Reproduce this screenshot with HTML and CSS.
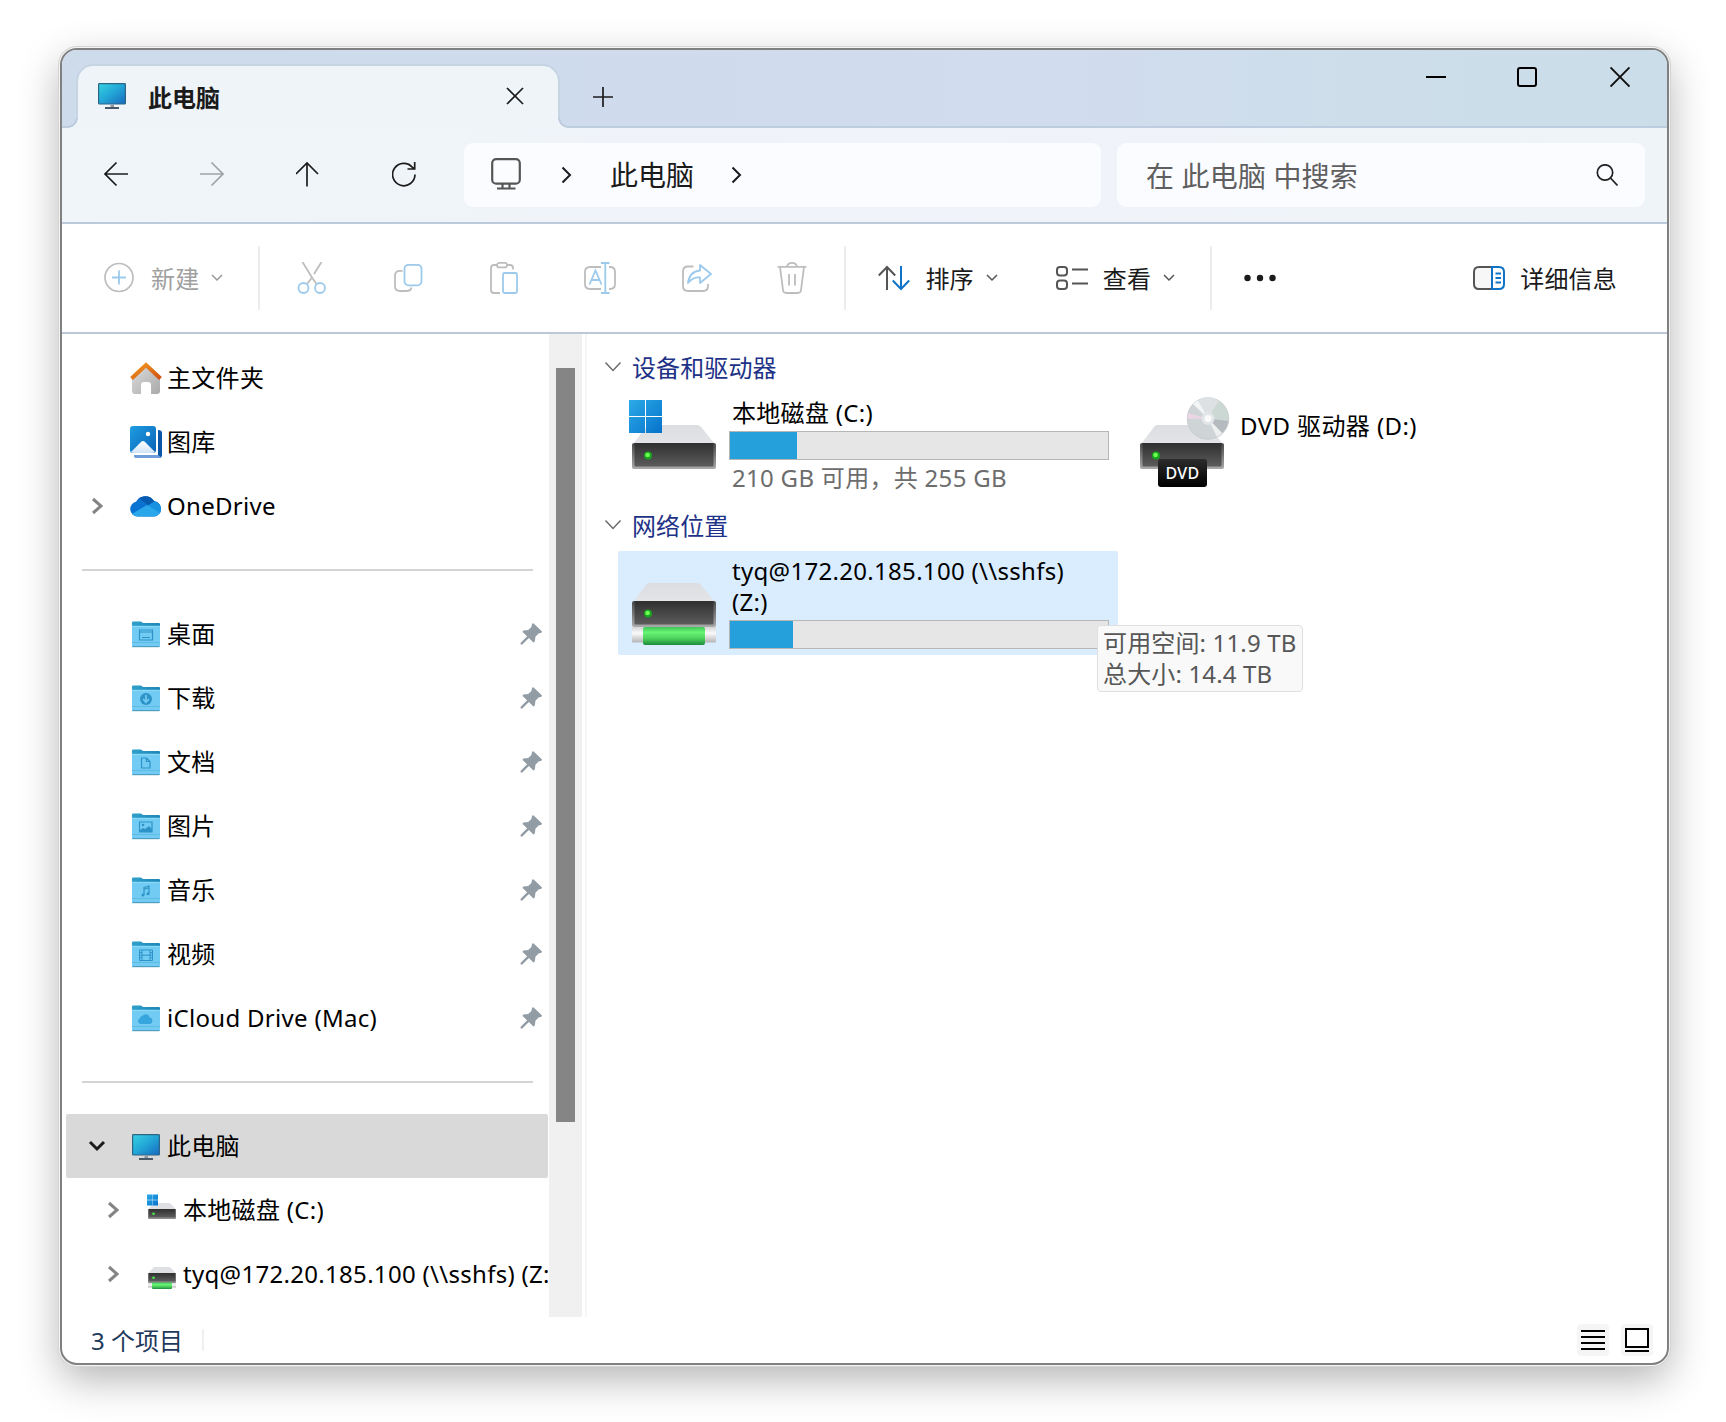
FILE: index.html
```html
<!DOCTYPE html>
<html lang="zh-CN">
<head>
<meta charset="utf-8">
<title>此电脑</title>
<link rel="stylesheet" href="styles.css">
</head>
<body>
<svg class="defs" width="0" height="0" aria-hidden="true">
  <defs>
    <linearGradient id="screen" x1="0" y1="0" x2="1" y2="1"><stop offset="0" stop-color="#35d3e2"/><stop offset=".5" stop-color="#22a5d6"/><stop offset="1" stop-color="#1668bd"/></linearGradient>
    <linearGradient id="win" x1="0" y1="0" x2="1" y2="1"><stop offset="0" stop-color="#2cabe8"/><stop offset="1" stop-color="#0672cb"/></linearGradient>
    <linearGradient id="front" x1="0" y1="0" x2="0" y2="1"><stop offset="0" stop-color="#2f2f2f"/><stop offset="1" stop-color="#5c5c5c"/></linearGradient>
    <linearGradient id="edge" x1="0" y1="0" x2="0" y2="1"><stop offset="0" stop-color="#4a4a4a"/><stop offset="1" stop-color="#aaaaaa"/></linearGradient>
    <linearGradient id="lid" x1="0" y1="0" x2="0" y2="1"><stop offset="0" stop-color="#dcdde0"/><stop offset="1" stop-color="#e4e5e9"/></linearGradient>
    <linearGradient id="cable" x1="0" y1="0" x2="0" y2="1"><stop offset="0" stop-color="#3fc65a"/><stop offset=".3" stop-color="#68f573"/><stop offset=".65" stop-color="#4ccf5c"/><stop offset="1" stop-color="#1c8b3c"/></linearGradient>
    <linearGradient id="sleeve" x1="0" y1="0" x2="0" y2="1"><stop offset="0" stop-color="#d4d4d6"/><stop offset=".4" stop-color="#fafafa"/><stop offset="1" stop-color="#b4b4b6"/></linearGradient>
    <linearGradient id="roof" x1="0" y1="0" x2="1" y2="1"><stop offset="0" stop-color="#f39a1f"/><stop offset="1" stop-color="#cf4f12"/></linearGradient>
    <linearGradient id="wall" x1="0" y1="0" x2="1" y2="1"><stop offset="0" stop-color="#dedede"/><stop offset="1" stop-color="#a9a9a9"/></linearGradient>
    <linearGradient id="photo" x1="0" y1="0" x2="1" y2="1"><stop offset="0" stop-color="#1d9de2"/><stop offset="1" stop-color="#0b63b4"/></linearGradient>
    <linearGradient id="hill" x1="0" y1="0" x2="0" y2="1"><stop offset="0" stop-color="#ffffff"/><stop offset="1" stop-color="#cfe4f8"/></linearGradient>
    <linearGradient id="back" x1="0" y1="0" x2="1" y2="0"><stop offset="0" stop-color="#2fa0cc"/><stop offset="1" stop-color="#1b87b8"/></linearGradient>
    <linearGradient id="dvdlabel" x1="0" y1="0" x2="0" y2="1"><stop offset="0" stop-color="#2c2c2c"/><stop offset="1" stop-color="#000000"/></linearGradient>

    <symbol id="pc" viewBox="0 0 28 26">
      <rect x=".6" y=".6" width="26.8" height="20.4" rx=".8" fill="url(#screen)" stroke="#2c6687" stroke-width="1.2"/>
      <rect x="12.5" y="21.5" width="3.5" height="2.6" fill="#8b98a3"/><rect x="7" y="24" width="14" height="2" fill="#495866"/>
    </symbol>
    <symbol id="windows" viewBox="0 0 33 33">
      <path d="M0 0h16v16H0zM17 0h16v16H17zM0 17h16v16H0zM17 17h16v16H17z" fill="url(#win)"/>
    </symbol>
    <symbol id="drive" viewBox="0 0 84 44">
      <path d="M17 0h48c2 0 3 1 4 2l14 17H1L14 2c1-1 2-2 3-2z" fill="url(#lid)"/>
      <rect x="0" y="18" width="84" height="26" rx="2" fill="url(#edge)"/>
      <rect x="2.5" y="18" width="79" height="23.500" rx="1" fill="url(#front)"/>
      <circle cx="16" cy="30.500" r="4" fill="#17a51d"/><circle cx="15.600" cy="30" r="2.300" fill="#6dff52"/>
    </symbol>
    <symbol id="minidrive" viewBox="0 0 28 16">
      <path d="M6 0h16l6 6.500H0z" fill="#dfe0e3"/><rect y="6" width="28" height="10" rx="1" fill="#8c8c8c"/><rect x=".6" y="6" width="26.800" height="8.400" fill="url(#front)"/><circle cx="5.500" cy="10.800" r="1.300" fill="#46f03f"/>
    </symbol>
    <symbol id="folder" viewBox="0 0 28 27">
      <path d="M0 1.500Q0 .5 1 .5h8l2 1.500h16q1 0 1 1V10H0z" fill="url(#back)"/>
      <rect y="5" width="28" height="21" rx="1.200" fill="#72cbf3"/><path d="M0 5.300h28" stroke="#93dbfa"/>
      <path d="M0 21.500h28" stroke="#5bb6df" stroke-width=".8"/><path d="M.5 25.600h27" stroke="#4f9dbf" stroke-width="1.200"/>
    </symbol>
    <symbol id="pin" viewBox="0 0 22 22">
      <path d="M13.400.3 21.800 8.200q.3 1.500-1.200 1.800l-2 .4-3.200 3.300-.5 4.600q-.8 1.800-2 .7l-4-3.900-6.600 6.500H.6L.5 20l6.600-6.700-4-3.800q-1.200-1.300.5-1.900l4.700-.5L11.400 4l.5-2.500Q12.300.3 13.400.3z" fill="#929ca4"/>
    </symbol>
    <symbol id="right" viewBox="0 0 12 18"><path d="M2 2l8 7-8 7" fill="none" stroke="currentColor" stroke-width="3"/></symbol>
    <symbol id="crumb" viewBox="0 0 11 18"><path d="M1.500 1.500 9 9l-7.500 7.500" fill="none" stroke="currentColor" stroke-width="2"/></symbol>
    <symbol id="down" viewBox="0 0 12 8"><path d="M1 1l5 5 5-5" fill="none" stroke="currentColor" stroke-width="1.500"/></symbol>
    <symbol id="group" viewBox="0 0 18 12"><path d="M1.500 1.500 9 9.500l7.500-8" fill="none" stroke="#6b6b6b" stroke-width="1.500"/></symbol>
  </defs>
</svg>

<main class="window">
  <header class="titlebar">
    <div class="tab">
      <svg width="28" height="26"><use href="#pc"/></svg>
      <span class="tab-title">此电脑</span>
      <svg class="tab-close" width="18" height="18" viewBox="0 0 18 18"><path d="M1 1l16 16M17 1 1 17" stroke="#1c1c1c" stroke-width="1.700"/></svg>
    </div>
    <svg class="tab-new" width="20" height="20" viewBox="0 0 20 20"><path d="M10 0v20M0 10h20" stroke="#1c1c1c" stroke-width="1.700"/></svg>
    <div class="controls">
      <svg width="20" height="22" viewBox="0 0 20 22"><path d="M0 11h20" stroke="#000" stroke-width="2"/></svg>
      <svg width="20" height="22" viewBox="0 0 20 22"><rect x="1" y="2" width="18" height="18" rx="2" fill="none" stroke="#000" stroke-width="2"/></svg>
      <svg width="20" height="22" viewBox="0 0 20 22"><path d="M.5 1.500l19 19M19.500 1.500l-19 19" stroke="#111" stroke-width="1.900"/></svg>
    </div>
  </header>

  <nav class="navbar">
    <div class="nav-buttons">
      <svg width="24" height="26" viewBox="0 0 24 26"><path d="M24 13H1M12.500 1.500 1 13l11.500 11.500" fill="none" stroke="#1c1c1c" stroke-width="1.700"/></svg>
      <svg width="24" height="26" viewBox="0 0 24 26"><path d="M0 13h23M11.500 1.500 23 13 11.500 24.500" fill="none" stroke="#a0a3a8" stroke-width="1.700"/></svg>
      <svg width="24" height="26" viewBox="0 0 24 26"><path d="M11 25.500V2M0 13 11 2l11 11" fill="none" stroke="#1c1c1c" stroke-width="1.700"/></svg>
      <svg width="26" height="26" viewBox="1 0 26 26"><path d="M24 13.500A11.200 11.200 0 1 1 21.500 6.500L23.500 8M23.700 1v7H16.500" fill="none" stroke="#1c1c1c" stroke-width="1.700"/></svg>
    </div>
    <div class="address">
      <svg width="30" height="32" viewBox="0 0 30 32"><g fill="none" stroke="#555" stroke-width="2.200"><rect x="1.200" y="1.200" width="27.600" height="24.500" rx="4"/><path d="M11.500 26v4M18.500 26v4M6 30.500h18.500"/></g></svg>
      <svg width="11" height="18"><use href="#crumb"/></svg>
      <span>此电脑</span>
      <svg width="11" height="18"><use href="#crumb"/></svg>
    </div>
    <div class="search">
      <span>在 此电脑 中搜索</span>
      <svg width="22" height="22" viewBox="0 0 22 22"><circle cx="9" cy="8.500" r="7.700" fill="none" stroke="#222" stroke-width="1.700"/><path d="M14.500 14l7 7.500" stroke="#222" stroke-width="1.700"/></svg>
    </div>
  </nav>

  <section class="toolbar">
    <div class="tool new">
      <svg width="30" height="32" viewBox="0 0 30 32"><circle cx="15" cy="15.500" r="14" fill="none" stroke="#bdbdbd" stroke-width="1.700"/><path d="M15 8.500v14M8 15.500h14" stroke="#9ccaec" stroke-width="1.800"/></svg>
      <span>新建</span><svg class="caret" width="12" height="8"><use href="#down"/></svg>
    </div>
    <i class="divider"></i>
    <div class="icons">
      <svg width="32" height="32" viewBox="0 0 32 32" fill="none" stroke-width="1.800"><path d="M6.500 0 16 15.500 20.500 22M25.500 0l-7.500 12M16 15.500 11 22" stroke="#bdbdbd"/><g stroke="#9ccaec"><circle cx="7.500" cy="26" r="5"/><circle cx="24" cy="26" r="5"/></g></svg>
      <svg width="32" height="32" viewBox="0 0 32 32" fill="none" stroke-width="1.800"><path d="M10.500 8.800H8q-5 0-5 5V24q0 5 5 5h6q5 0 5.500-3.500" stroke="#bdbdbd"/><rect x="12.500" y="2.800" width="17" height="20.500" rx="4" stroke="#9ccaec"/></svg>
      <svg width="32" height="32" viewBox="0 0 32 32" fill="none" stroke-width="1.800"><path d="M9 3H6Q3 3 3 6v22q0 3 3 3h6M19 3h3q3 0 3 3v1.500" stroke="#bdbdbd"/><rect x="9" y=".900" width="10" height="4.500" rx="2.200" stroke="#bdbdbd"/><rect x="15" y="11" width="14" height="20" rx="1.500" stroke="#9ccaec"/></svg>
      <svg width="32" height="32" viewBox="0 0 32 32" fill="none" stroke-width="1.800"><path d="M17 5H6Q1 5 1 10v12q0 5 5 5h11M25 5h1q5 0 5 5v12q0 5-5 5h-1" stroke="#bdbdbd"/><path d="M5.500 22.500 11.500 8.500 17.500 22.500M7.500 18h8M17 1h8.500M17 31h8.500M21.300 1v30" stroke="#9ccaec"/></svg>
      <svg width="32" height="32" viewBox="0 0 32 32" fill="none" stroke-width="1.800"><path d="M13.500 4.500H8q-5 0-5 5V24q0 5 5 5h15q5 0 5-5v-2" stroke="#bdbdbd"/><path d="M20 3 31 12 20 21v-5.500q-7-.5-12 5.500Q9.500 9.500 20 8.500z" stroke="#9ccaec" stroke-linejoin="round"/></svg>
      <svg width="32" height="32" viewBox="0 0 32 32" fill="none" stroke="#bdbdbd" stroke-width="1.800"><path d="M1.500 4.900h29M4 5l3 23q.3 3 3.300 3h11.400q3 0 3.300-3L28 5M11 4.500Q12 .9 16 .9t5 3.600M13 12v11.500M19 12v11.500"/></svg>
    </div>
    <i class="divider"></i>
    <div class="tool sort">
      <svg width="32" height="26" viewBox="0 0 32 26" fill="none" stroke-width="2"><path d="M9 25V2M.8 10.500 9 2l8.200 8.500" stroke="#555"/><path d="M23 1v23M14.800 15.500 23 24l8.200-8.500" stroke="#0f74c8"/></svg>
      <span>排序</span><svg class="caret" width="12" height="8"><use href="#down"/></svg>
    </div>
    <div class="tool view">
      <svg width="32" height="26" viewBox="0 0 32 26" fill="none" stroke="#555" stroke-width="2"><rect x="1" y="2" width="10" height="8.500" rx="3"/><rect x="1" y="15.500" width="10" height="8.500" rx="3"/><path d="M16 4.500h16M16 18.500h16"/></svg>
      <span>查看</span><svg class="caret" width="12" height="8"><use href="#down"/></svg>
    </div>
    <i class="divider"></i>
    <svg class="more" width="32" height="8" viewBox="0 0 32 8"><circle cx="3.500" cy="4" r="3.200"/><circle cx="16" cy="4" r="3.200"/><circle cx="28.500" cy="4" r="3.200"/></svg>
    <div class="tool details">
      <svg width="32" height="26" viewBox="0 0 32 26" fill="none" stroke-width="2"><path d="M18.500 2H6Q1 2 1 7v12q0 5 5 5h12.500" fill="#f7f7f7" stroke="#555"/><path d="M19 2h7q5 0 5 5v12q0 5-5 5h-7z" stroke="#0f74c8" fill="#fff"/><path d="M22.500 8.500H28M22.500 13H28M22.500 17.500H28" stroke="#0f74c8"/></svg>
      <span>详细信息</span>
    </div>
  </section>

  <div class="body">
    <aside class="sidebar">
      <div class="row"><span class="exp"></span><svg width="32" height="32" viewBox="0 0 32 32"><path d="M2 14 16 2l14 12v15q0 3-3 3h-6v-9q0-3-3-3h-4q-3 0-3 3v9H5q-3 0-3-3z" fill="url(#wall)"/><path d="M1.500 16.500 16 3l14.500 13.500" fill="none" stroke="url(#roof)" stroke-width="4"/></svg><span>主文件夹</span></div>
      <div class="row"><span class="exp"></span><svg width="32" height="32" viewBox="0 0 32 32"><path d="M28 4q4 0 4 3v22q0 3-3 3H7q-3 0-3-3h24z" fill="#0b57a6"/><path d="M4 29h24l3 2-2 1H7q-3 0-3-3z" fill="#6f9fd8"/><rect width="28" height="28" rx="3" fill="#fff"/><rect width="26" height="27" rx="3" fill="url(#photo)"/><path d="M1 26 11 16q2-2 4 0l10 10q-1 1-3 1H4q-2 0-3-1z" fill="url(#hill)"/><circle cx="18" cy="8" r="2.200" fill="#fff"/></svg><span>图库</span></div>
      <div class="row"><svg class="exp" width="12" height="18"><use href="#right"/></svg><svg width="32" height="32" viewBox="0 0 32 32"><clipPath id="cloudclip"><path d="M7.500 26.500a7.500 7.500 0 0 1-1.500-14.800A10.500 10.500 0 0 1 24.300 11.300a7.700 7.700 0 0 1 .5 15.200z"/></clipPath><g clip-path="url(#cloudclip)"><path d="M0 0h32v32H0z" fill="#0a72d0"/><path d="M5 9 12 4h18v16L17 14.500 10 9z" fill="#065bb0"/><path d="M17 16l8-5 8 2v12z" fill="#1791e0"/><path d="M0 25 17 15l15 9v8H0z" fill="#29a7ea"/></g></svg><span>OneDrive</span></div>
      <div class="rule"></div>
      <div class="row"><span class="exp"></span><svg class="fold" width="28" height="27" viewBox="0 0 28 27"><use href="#folder"/><path d="M7.500 9h13v10h-13zM7.500 11h13M10 16.500h8" fill="none" stroke="#2d93c8" stroke-width="1.200"/></svg><span>桌面</span><svg class="pin" width="22" height="22"><use href="#pin"/></svg></div>
      <div class="row"><span class="exp"></span><svg class="fold" width="28" height="27" viewBox="0 0 28 27"><use href="#folder"/><circle cx="14" cy="14" r="6" fill="#2d93c8"/><path d="M14 10v7M11 14l3 3.200 3-3.200" fill="none" stroke="#72cbf3" stroke-width="1.700"/></svg><span>下载</span><svg class="pin" width="22" height="22"><use href="#pin"/></svg></div>
      <div class="row"><span class="exp"></span><svg class="fold" width="28" height="27" viewBox="0 0 28 27"><use href="#folder"/><path d="M9.500 9h5l3.500 3.500V19H9.500zM14.500 9v3.500H18" fill="none" stroke="#2d93c8" stroke-width="1.200"/></svg><span>文档</span><svg class="pin" width="22" height="22"><use href="#pin"/></svg></div>
      <div class="row"><span class="exp"></span><svg class="fold" width="28" height="27" viewBox="0 0 28 27"><use href="#folder"/><path d="M7.500 9h12.500v10H7.500z" fill="none" stroke="#2d93c8" stroke-width="1.200"/><path d="M8 18v-1l3-2 2 1 4-3 3 3v3H8z" fill="#2d93c8"/><circle cx="11" cy="12" r="1.300" fill="#2d93c8"/></svg><span>图片</span><svg class="pin" width="22" height="22"><use href="#pin"/></svg></div>
      <div class="row"><span class="exp"></span><svg class="fold" width="28" height="27" viewBox="0 0 28 27"><use href="#folder"/><path d="M12 18V10.500l5-1.500v7.500M12 12.200l5-1.500" fill="none" stroke="#2d93c8" stroke-width="1.200"/><circle cx="11" cy="18" r="1.500" fill="#2d93c8"/><circle cx="16" cy="16.700" r="1.500" fill="#2d93c8"/></svg><span>音乐</span><svg class="pin" width="22" height="22"><use href="#pin"/></svg></div>
      <div class="row"><span class="exp"></span><svg class="fold" width="28" height="27" viewBox="0 0 28 27"><use href="#folder"/><path d="M7.500 9h13v10.500h-13zM10 9v10.500M18 9v10.500M10 14.200h8M7.500 11.600H10M7.500 14.200H10M7.500 16.800H10M18 11.600h2.500M18 14.200h2.500M18 16.800h2.500" fill="none" stroke="#2d93c8"/></svg><span>视频</span><svg class="pin" width="22" height="22"><use href="#pin"/></svg></div>
      <div class="row"><span class="exp"></span><svg class="fold" width="28" height="27" viewBox="0 0 28 27"><use href="#folder"/><path d="M8.500 19a3 3 0 0 1-.5-5.800 3 3 0 0 1 2.500-2.500 4 4 0 0 1 7 1.500 3.500 3.500 0 0 1 .5 6.800z" fill="#37a5de"/></svg><span>iCloud Drive (Mac)</span><svg class="pin" width="22" height="22"><use href="#pin"/></svg></div>
      <div class="rule"></div>
      <div class="row selected"><svg class="exp" width="18" height="12" viewBox="0 0 18 12"><path d="M2 2l7 7 7-7" fill="none" stroke="#1b1b1b" stroke-width="3"/></svg><svg class="fold" width="28" height="26"><use href="#pc"/></svg><span>此电脑</span></div>
      <div class="row child"><svg class="exp" width="12" height="18"><use href="#right"/></svg><svg width="32" height="32" viewBox="0 0 32 32"><use href="#minidrive" x="2" y="9" width="28" height="16"/><use href="#windows" x="1" y="0" width="11" height="12"/></svg><span>本地磁盘 (C:)</span></div>
      <div class="row child"><svg class="exp" width="12" height="18"><use href="#right"/></svg><svg width="32" height="32" viewBox="0 0 32 32"><use href="#minidrive" x="2" y="9" width="28" height="16"/><rect x="2" y="25" width="28" height="4.500" fill="url(#sleeve)"/><rect x="6" y="24.500" width="20" height="6.500" rx="1" fill="url(#cable)"/></svg><span>tyq@172.20.185.100 (\\sshfs) (Z:)</span></div>
    </aside>
    <div class="scrollbar"><div class="thumb"></div></div>

    <section class="content">
      <h2><svg width="18" height="12"><use href="#group"/></svg>设备和驱动器</h2>
      <div class="tiles">
        <article class="tile">
          <svg class="art" width="90" height="104" viewBox="0 0 90 104"><use href="#drive" x="4" y="31" width="84" height="44"/><use href="#windows" x="1" y="6" width="33" height="33"/></svg>
          <div class="info"><span class="name">本地磁盘 (C:)</span><div class="meter"><div class="fill" style="width:67px"></div></div><span class="free">210 GB 可用，共 255 GB</span></div>
        </article>
        <article class="tile">
          <svg class="art" width="104" height="104" viewBox="0 0 104 104"><use href="#drive" x="4" y="31" width="84" height="44"/>
            <circle cx="72" cy="24.500" r="20.800" fill="#cfd4d6" stroke="#c0c6c8" stroke-width=".7"/>
            <path d="M72 24.500 57 10A21 21 0 0 1 83 7z" fill="#dde1e3"/><path d="M72 24.500 83 7A21 21 0 0 1 92.500 27z" fill="#cbd8d3"/><path d="M72 24.500 92.500 27A21 21 0 0 1 86 39z" fill="#b4babd"/><path d="M72 24.500 86 39l-5 4z" fill="#eef0f0"/><path d="M72 24.500 51.500 19v6z" fill="#ead5e5"/><path d="M72 24.500 57 10l5-3.500z" fill="#f3f5f5"/>
            <circle cx="72" cy="24.500" r="6.500" fill="#e3e6e8"/><circle cx="72" cy="24.500" r="3.500" fill="#fafafa"/>
            <rect x="22" y="65" width="49" height="28" rx="3" fill="url(#dvdlabel)"/><text class="dvd" x="46.500" y="84.500" text-anchor="middle">DVD</text></svg>
          <div class="info plain"><span class="name">DVD 驱动器 (D:)</span></div>
        </article>
      </div>
      <h2><svg width="18" height="12"><use href="#group"/></svg>网络位置</h2>
      <div class="tiles">
        <article class="tile hover">
          <svg class="art" width="90" height="104" viewBox="0 0 90 104"><use href="#drive" x="4" y="32" width="84" height="44"/><rect x="4" y="76" width="84" height="15.500" rx="1" fill="url(#sleeve)"/><rect x="15" y="76" width="62" height="18" rx="2" fill="url(#cable)"/></svg>
          <div class="info"><span class="name">tyq@172.20.185.100 (\\sshfs)<br>(Z:)</span><div class="meter"><div class="fill" style="width:63px"></div></div></div>
          <div class="tooltip">可用空间: 11.9 TB<br>总大小: 14.4 TB</div>
        </article>
      </div>
    </section>
  </div>

  <footer class="status">
    <span class="count">3 个项目</span>
    <span class="modes">
      <svg width="32" height="32" viewBox="0 0 32 32"><path d="M4 7h24M4 13h24M4 19h24M4 25h24" stroke="#000" stroke-width="2"/></svg>
      <svg width="32" height="32" viewBox="0 0 32 32"><rect x="5" y="5" width="22" height="18" fill="#fff" stroke="#000" stroke-width="2"/><path d="M4 27h24" stroke="#000" stroke-width="2"/></svg>
    </span>
  </footer>
</main>
</body>
</html>
```

FILE: styles.css
```css
* { box-sizing: border-box; }

body {
  margin: 0;
  height: 1422px;
  padding: 48px 57px 57px 60px;
  overflow: hidden;
  background: #fff;
  color: #000;
  font: 24px/31px "Noto Sans", "Noto Sans CJK SC", sans-serif;
}

svg { display: block; flex: none; }
.defs { position: absolute; }

.window {
  display: flex;
  flex-direction: column;
  width: 1609px;
  height: 1317px;
  border: 2px solid #808080;
  border-radius: 17px;
  overflow: hidden;
  background: #fff;
  box-shadow: 0 0 0 1px #f4f4f4, 0 0 0 2px #d4d4d4, 0 14px 40px rgba(0, 0, 0, .3);
}

/* Title bar and tab */
.titlebar {
  flex: none;
  display: flex;
  align-items: flex-end;
  height: 78px;
  padding-left: 14px;
  background: linear-gradient(90deg, #cddbeb, #d1dcee 62%, #cddeea 82%, #cbdde9);
  box-shadow: inset 0 -2px #bdccdf;
}
.tab {
  position: relative;
  display: flex;
  align-items: center;
  width: 484px;
  height: 64px;
  padding: 0 34px 2px 20px;
  border: 2px solid #c6d4e4;
  border-bottom: 0;
  border-radius: 17px 17px 0 0;
  background: #eff4f9;
  background-clip: padding-box;
}
.tab::before,
.tab::after {
  content: "";
  position: absolute;
  bottom: 0;
  width: 10px;
  height: 10px;
}
.tab::before { left: -10px; background: radial-gradient(circle at 0 0, transparent 7.500px, #bdccdf 8px, #bdccdf 9.500px, #eff4f9 10px); }
.tab::after { right: -10px; background: radial-gradient(circle at 100% 0, transparent 7.500px, #bdccdf 8px, #bdccdf 9.500px, #eff4f9 10px); }
.tab-title { margin: 2px auto 0 22px; color: #1b1b1b; font-weight: 700; }
.tab-close { margin: -1px 0 0; }
.tab-new { margin: 0 0 21px 33px; }
.controls { display: flex; gap: 72px; margin: 0 37px 40px auto; }
.controls svg:nth-child(2) { margin: 0 1px 0 -1px; }

/* Navigation */
.navbar {
  flex: none;
  display: flex;
  align-items: center;
  height: 96px;
  padding: 0 22px 0 42px;
  border-bottom: 2px solid #bccadb;
  background: linear-gradient(90deg, #eff5f9, #f0f3f9 55%, #eef4f8);
}
.nav-buttons { display: flex; gap: 72px; width: 360px; margin-top: -2px; }
.address, .search {
  display: flex;
  align-items: center;
  height: 64px;
  border-radius: 9px;
  background: #fbfcff;
  font-size: 28px;
}
.address { width: 637px; margin-right: 16px; padding-left: 27px; color: #1b1b1b; }
.address svg:first-child { margin-top: -3px; }
.address svg:nth-child(2) { margin: 0 38px 0 40px; }
.address span { margin-right: 37px; }
.search { width: 528px; padding: 0 27px 0 29px; justify-content: space-between; color: #5f5f60; }
.search span { margin-top: 2px; letter-spacing: .15px; }

/* Command bar */
.toolbar {
  flex: none;
  display: flex;
  align-items: center;
  height: 110px;
  padding: 0 50px 0 42px;
  border-bottom: 2px solid #bcc8da;
  color: #1b1b1b;
}
.tool { display: flex; align-items: center; }
.tool span { margin: 1px 12px 0 15px; letter-spacing: .2px; }
.caret { color: #555; }
.new { color: #a0a0a0; }
.new span { margin-left: 17px; }
.new .caret { color: #999; }
.divider { width: 2px; height: 64px; background: #ececec; }
.new + .divider { margin: 0 36px 0 35px; }
.icons { display: flex; gap: 64px; margin-right: 36px; }
.sort { margin-left: 32px; }
.view { margin: 0 35px 0 58px; }
.more { margin-left: 32px; fill: #1b1b1b; }
.details { margin-left: auto; }
.details span { margin-right: 0; }

/* Body */
.body { flex: none; display: flex; height: 983px; letter-spacing: .3px; }
.sidebar { width: 487px; padding-top: 12px; overflow: hidden; }
.row {
  display: flex;
  align-items: center;
  height: 64px;
  margin: 0 1px 0 4px;
  padding-right: 6px;
  overflow: hidden;
  white-space: nowrap;
}
.row > span { margin: -1px 0 0 5px; }
.row > .exp { flex: none; width: 18px; margin: 0 24px 0 22px; color: #858585; }
.row > svg.exp[width="12"] { width: 12px; margin: 0 27px 0 25px; }
.row > .fold { margin: 1px 2px 0; }
.row .pin { margin-left: auto; }
.row.child { padding-left: 16px; padding-right: 0; }
.row.selected { border-radius: 2px; background: #d9d9d9; }
.rule { height: 64px; margin: 0 16px 0 20px; background: linear-gradient(#d4d4d4, #d4d4d4) 0 31px / 100% 2px no-repeat; }
.scrollbar { width: 33px; padding: 34px 7px 0; background: #f0f0f0; }
.thumb { height: 754px; background: #858585; }

/* Drives */
.content { flex: 1; margin-left: 3px; padding-top: 7px; border-left: 2px solid #f6f6f6; }
h2 {
  display: flex;
  align-items: center;
  gap: 10px;
  height: 52px;
  margin: 0 0 0 17px;
  color: #1e3287;
  font-size: 24px;
  font-weight: 400;
  letter-spacing: .1px;
}
.tiles { display: flex; gap: 8px; height: 105px; padding: 1px 0 0 31px; }
.tiles + h2 { padding-top: 2px; }
.tile { position: relative; flex: none; display: flex; width: 500px; height: 104px; border-radius: 2px; }
.hover { background: #d9edff; }
.art { margin-left: 10px; }
.info { display: flex; flex-direction: column; width: 380px; padding-top: 3px; margin-left: 11px; }
.info.plain { margin-left: -3px; padding-top: 16px; letter-spacing: .4px; }
.name, .free { padding: 0 3px; }
.free { margin-top: 2px; color: #6d6d6d; }
.meter { height: 29px; margin-top: 3px; border: 1px solid #b6b6b6; background: #e6e6e6; }
.hover .info { padding-top: 4px; }
.fill { height: 100%; background: #26a0da; }
.dvd { fill: #fff; font-size: 16px; font-weight: 500; }
.tooltip {
  position: absolute;
  left: 479px;
  top: 74px;
  width: 206px;
  padding: 1px 5px 2px;
  border: 1px solid #dfdfdf;
  border-radius: 4px;
  background: #f9f9f9;
  color: #575757;
  letter-spacing: .15px;
  white-space: nowrap;
}

/* Status bar */
.status { flex: 1; display: flex; align-items: center; justify-content: space-between; padding: 0 14px 0 29px; }
.count { padding-right: 21px; color: #1e395b; background: linear-gradient(#f0f0f0, #f0f0f0) 100% 50% / 2px 22px no-repeat; }
.modes { display: flex; gap: 12px; }
.modes svg { border-radius: 4px; background: #f5f5f5; }
```
